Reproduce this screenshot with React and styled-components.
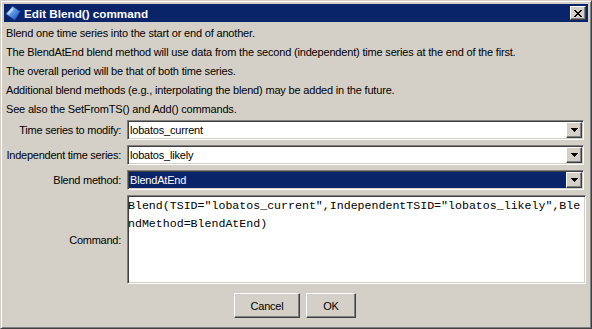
import React from 'react';
import styled, { createGlobalStyle } from 'styled-components';

const GlobalStyle = createGlobalStyle`
  html, body {
    margin: 0;
    padding: 0;
    background: #D4D0C8;
  }
  body {
    font-family: "Liberation Sans", Arial, sans-serif;
  }
`;

// classic windows bevels
const raisedBevel = `
  border: 1px solid;
  border-color: #FFFFFF #404040 #404040 #FFFFFF;
  box-shadow: inset -1px -1px 0 #808080, inset 1px 1px 0 #D4D0C8;
`;

const sunkenBevel = `
  border: 1px solid;
  border-color: #808080 #FFFFFF #FFFFFF #808080;
  box-shadow: inset 1px 1px 0 #404040, inset -1px -1px 0 #D4D0C8;
`;

const Window = styled.div`
  width: 592px;
  height: 329px;
  box-sizing: border-box;
  background: #D4D0C8;
  border: 1px solid;
  border-color: #D4D0C8 #404040 #404040 #D4D0C8;
  box-shadow: inset 1px 1px 0 #FFFFFF, inset -1px -1px 0 #808080;
  padding: 3px;
  display: flex;
  flex-direction: column;
`;

const TitleBar = styled.div`
  height: 18px;
  flex: none;
  background: #0A246A;
  display: flex;
  align-items: center;
  padding: 0 2px 0 1px;
  color: #FFFFFF;
`;

const TitleText = styled.span`
  flex: 1;
  margin-left: 3px;
  font-weight: bold;
  font-size: 11.7px;
  white-space: nowrap;
`;

const CloseButton = styled.div`
  width: 16px;
  height: 14px;
  box-sizing: border-box;
  background: #D4D0C8;
  ${raisedBevel}
  display: flex;
  align-items: center;
  justify-content: center;
`;

const Content = styled.div`
  flex: 1;
  display: flex;
  flex-direction: column;
  padding: 2px 4px 0 2px;
`;

const Line = styled.p`
  margin: 0;
  height: 19px;
  line-height: 19px;
  font-size: 11px;
  letter-spacing: -0.18px;
  color: #000000;
  white-space: nowrap;
`;

const Form = styled.div`
  margin-top: 1px;
  display: grid;
  grid-template-columns: 115px 1fr;
  grid-template-rows: 20px 20px 20px 89px;
  column-gap: 6px;
  row-gap: 5px;
`;

const Label = styled.label`
  justify-self: end;
  align-self: center;
  font-size: 11px;
  letter-spacing: -0.25px;
  color: #000000;
  white-space: nowrap;
`;

const Combo = styled.div`
  height: 20px;
  box-sizing: border-box;
  ${sunkenBevel}
  padding: 1px;
  background: #FFFFFF;
  display: flex;
`;

const ComboValue = styled.div`
  flex: 1;
  padding-left: 1px;
  line-height: 16px;
  font-size: 11px;
  letter-spacing: -0.2px;
  background: ${(p) => (p.selected ? '#0A246A' : '#FFFFFF')};
  color: ${(p) => (p.selected ? '#FFFFFF' : '#000000')};
  white-space: nowrap;
`;

const ArrowButton = styled.div`
  width: 16px;
  height: 16px;
  box-sizing: border-box;
  background: #D4D0C8;
  ${raisedBevel}
  display: flex;
  align-items: center;
  justify-content: center;
`;

const CommandArea = styled.textarea`
  margin: 0 -2px 0 0;
  box-sizing: border-box;
  height: 89px;
  ${sunkenBevel}
  padding: 1px 0 0 0;
  background: #FFFFFF;
  resize: none;
  overflow: hidden;
  outline: none;
  font-family: "Liberation Mono", "Courier New", monospace;
  font-size: 11.6px;
  line-height: 18px;
  color: #000000;
  word-break: break-all;
  white-space: pre-wrap;
`;

const ButtonRow = styled.div`
  margin-top: 9px;
  display: flex;
  justify-content: center;
  gap: 6px;
`;

const Button = styled.button`
  width: ${(p) => p.width}px;
  height: 25px;
  box-sizing: border-box;
  background: #D4D0C8;
  ${raisedBevel}
  padding: 0;
  font-family: "Liberation Sans", Arial, sans-serif;
  font-size: 11px;
  letter-spacing: -0.2px;
  color: #000000;
`;

const AppIcon = () => (
  <svg width="16" height="16" viewBox="0 0 16 16">
    <defs>
      <linearGradient id="gem" x1="0" y1="0" x2="1" y2="1">
        <stop offset="0" stopColor="#D8ECFF" />
        <stop offset="0.45" stopColor="#5C9AE8" />
        <stop offset="1" stopColor="#0A3CB0" />
      </linearGradient>
    </defs>
    <path d="M0.5 9 L7.5 1 L15.5 6.5 L10 15.5 Z" fill="url(#gem)" stroke="#0A2A80" strokeWidth="0.8" />
    <path d="M2.5 8.5 L7.5 3 L8.5 4.5 L4 9.5 Z" fill="#FFFFFF" opacity="0.6" />
  </svg>
);

const xRows = [[0, 2, 6, 2], [1, 2, 5, 2], [2, 4], [3, 2], [2, 4], [1, 2, 5, 2], [0, 2, 6, 2]];

const CloseGlyph = () => (
  <svg width="8" height="7" viewBox="0 0 8 7" shapeRendering="crispEdges">
    {xRows.map((r, y) => (
      <React.Fragment key={y}>
        <rect x={r[0]} y={y} width={r[1]} height="1" fill="#000" />
        {r.length > 2 && <rect x={r[2]} y={y} width={r[3]} height="1" fill="#000" />}
      </React.Fragment>
    ))}
  </svg>
);

const DownArrow = () => (
  <svg width="7" height="4" viewBox="0 0 7 4" shapeRendering="crispEdges">
    <rect x="0" y="0" width="7" height="1" fill="#000" />
    <rect x="1" y="1" width="5" height="1" fill="#000" />
    <rect x="2" y="2" width="3" height="1" fill="#000" />
    <rect x="3" y="3" width="1" height="1" fill="#000" />
  </svg>
);

const ComboBox = ({ value, selected }) => (
  <Combo>
    <ComboValue selected={selected}>{value}</ComboValue>
    <ArrowButton>
      <DownArrow />
    </ArrowButton>
  </Combo>
);

const notes = [
  'Blend one time series into the start or end of another.',
  'The BlendAtEnd blend method will use data from the second (independent) time series at the end of the first.',
  'The overall period will be that of both time series.',
  'Additional blend methods (e.g., interpolating the blend) may be added in the future.',
  'See also the SetFromTS() and Add() commands.',
];

const command =
  'Blend(TSID="lobatos_current",IndependentTSID="lobatos_likely",BlendMethod=BlendAtEnd)';

const App = () => (
  <>
    <GlobalStyle />
    <Window>
      <TitleBar>
        <AppIcon />
        <TitleText>Edit Blend() command</TitleText>
        <CloseButton>
          <CloseGlyph />
        </CloseButton>
      </TitleBar>
      <Content>
        {notes.map((n) => (
          <Line key={n}>{n}</Line>
        ))}
        <Form>
          <Label>Time series to modify:</Label>
          <ComboBox value="lobatos_current" />
          <Label>Independent time series:</Label>
          <ComboBox value="lobatos_likely" />
          <Label>Blend method:</Label>
          <ComboBox value="BlendAtEnd" selected />
          <Label>Command:</Label>
          <CommandArea readOnly value={command} spellCheck={false} />
        </Form>
        <ButtonRow>
          <Button width={66}>Cancel</Button>
          <Button width={50}>OK</Button>
        </ButtonRow>
      </Content>
    </Window>
  </>
);

export default App;
